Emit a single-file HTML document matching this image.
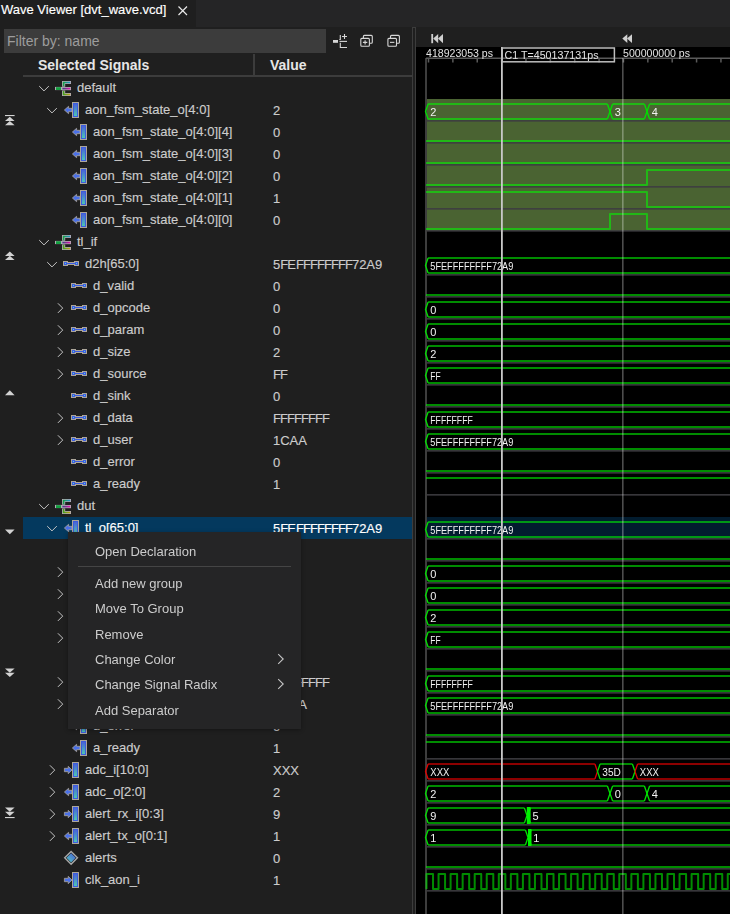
<!DOCTYPE html>
<html><head><meta charset="utf-8"><style>
html,body{margin:0;padding:0;}
body{width:730px;height:914px;overflow:hidden;position:relative;background:#1f1f1f;font-family:"Liberation Sans", sans-serif;}
.t{position:absolute;white-space:nowrap;-webkit-text-stroke:0.15px currentColor;}
.r{position:absolute;}
.wt{font-family:"Liberation Sans", sans-serif;font-size:11px;fill:#f2f2f2;}
.rt{font-family:"Liberation Sans", sans-serif;font-size:11px;fill:#e4e4e4;}
</style></head><body>
<div class="r" style="left:0px;top:0px;width:730px;height:27px;background:#252526;"></div><div class="r" style="left:0px;top:0px;width:196px;height:27px;background:#1f1f1f;"></div><div class="t" style="left:1px;top:3.23px;font-size:13px;line-height:14.52px;color:#ffffff;font-weight:normal;">Wave Viewer [dvt_wave.vcd]</div><svg class="r" style="left:176px;top:4px" width="14" height="14" viewBox="0 0 14 14"><path d="M2.5 2.5 L11 11 M11 2.5 L2.5 11" stroke="#e8e8e8" stroke-width="1.2" fill="none"/></svg><div class="r" style="left:4px;top:29px;width:322px;height:24px;background:#3c3c3c;"></div><div class="t" style="left:7px;top:33.83px;font-size:14px;line-height:15.64px;color:#9d9d9d;font-weight:normal;-webkit-text-stroke:0;">Filter by: name</div><svg class="r" style="left:330px;top:32px" width="76" height="18" viewBox="0 0 76 18">
<g fill="none" stroke="#d6d6d6" stroke-width="1.1">
<rect x="3" y="8" width="5" height="2.8" fill="#d6d6d6" stroke="none"/>
<path d="M10.3 3 V7.5 H9.3"/>
<path d="M9.5 9.4 H17"/>
<path d="M9.8 11.3 H10.3 V15.5 H17"/>
<path d="M14.5 2 V7 M12 4.5 H17"/>
<path d="M33.4 6.2 V4.4 Q33.4 3.4 34.4 3.4 H41.3 Q42.3 3.4 42.3 4.4 V10.3 Q42.3 11.3 41.3 11.3 H39.5"/>
<rect x="30.8" y="6.4" width="8.6" height="7.9" rx="1"/>
<path d="M35.1 8.2 V12.5 M32.9 10.35 H37.3"/>
<path d="M60.5 6.2 V4.4 Q60.5 3.4 61.5 3.4 H68.4 Q69.4 3.4 69.4 4.4 V10.3 Q69.4 11.3 68.4 11.3 H66.6"/>
<rect x="57.9" y="6.4" width="8.6" height="7.9" rx="1"/>
<path d="M60 10.35 H64.4"/>
</g></svg><div class="t" style="left:38px;top:58.33px;font-size:14px;line-height:15.64px;color:#e6e6e6;font-weight:bold;-webkit-text-stroke:0;">Selected Signals</div><div class="t" style="left:270px;top:58.33px;font-size:14px;line-height:15.64px;color:#e6e6e6;font-weight:bold;-webkit-text-stroke:0;">Value</div><div class="r" style="left:253px;top:54px;width:2px;height:21px;background:#3c3c3c;"></div><div class="r" style="left:23px;top:75px;width:389px;height:2px;background:#3c3c3c;"></div><div class="r" style="left:412px;top:27px;width:4px;height:887px;background:#1f1f1f;box-sizing:border-box;border:1px solid #3c3c3c;border-bottom:none;"></div><div class="r" style="left:23px;top:517px;width:389px;height:22px;background:#04395e;"></div><svg width="0" height="0" style="position:absolute"><defs>
<linearGradient id="gb" x1="0" y1="0" x2="0" y2="1"><stop offset="0" stop-color="#4a62d8"/><stop offset="1" stop-color="#4cc6b4"/></linearGradient>
<linearGradient id="gd" x1="1" y1="0" x2="0" y2="1"><stop offset="0" stop-color="#4a5ed8"/><stop offset="1" stop-color="#52c8c0"/></linearGradient>
<linearGradient id="gt" x1="0" y1="0" x2="1" y2="0"><stop offset="0" stop-color="#1a9a50"/><stop offset="1" stop-color="#2a8ad0"/></linearGradient>
<linearGradient id="gm" x1="0" y1="0" x2="1" y2="0"><stop offset="0" stop-color="#303a70"/><stop offset="1" stop-color="#d010a0"/></linearGradient>
<linearGradient id="go" x1="0" y1="0" x2="1" y2="0"><stop offset="0" stop-color="#2a9a2a"/><stop offset="1" stop-color="#b0a020"/></linearGradient>
</defs></svg><svg class="r" style="left:38px;top:84px" width="12" height="8" viewBox="0 0 12 8"><path d="M1.2 2.1 L6 6.9 L10.8 2.1" stroke="#c5c5c5" stroke-width="1" fill="none"/></svg><svg class="r" style="left:55px;top:80px" width="17" height="17" viewBox="0 0 17 17">
<g stroke="#b4aab4" stroke-width="3.2" fill="none" stroke-linecap="square">
<path d="M1.6 8.5 H5.4"/><path d="M14.4 2.5 H8.6 V5.2"/><path d="M8.3 8.6 H14.4"/><path d="M8.6 12 V14.5 H14.4"/>
</g>
<rect x="1" y="7.2" width="5" height="2.8" fill="#13a040"/>
<g fill="none" stroke-width="1.6" stroke-linecap="square">
<path d="M14.4 2.5 H8.6 V5.4" stroke="url(#gt55_80)"/>
<path d="M8.2 8.6 H14.4" stroke="url(#gm55_80)"/>
<path d="M8.6 11.8 V14.5 H14.4" stroke="url(#go55_80)"/>
</g>
<defs>
<linearGradient id="gt55_80" gradientUnits="userSpaceOnUse" x1="8" y1="0" x2="15" y2="0"><stop offset="0" stop-color="#18a040"/><stop offset="1" stop-color="#2090c8"/></linearGradient>
<linearGradient id="gm55_80" gradientUnits="userSpaceOnUse" x1="8" y1="0" x2="15" y2="0"><stop offset="0" stop-color="#404080"/><stop offset="1" stop-color="#e010a8"/></linearGradient>
<linearGradient id="go55_80" gradientUnits="userSpaceOnUse" x1="8" y1="0" x2="15" y2="0"><stop offset="0" stop-color="#40a020"/><stop offset="1" stop-color="#b8a010"/></linearGradient>
</defs>
</svg><div class="t" style="left:77px;top:81.23px;font-size:13px;line-height:14.52px;color:#cccccc;font-weight:normal;">default</div><svg class="r" style="left:46px;top:106px" width="12" height="8" viewBox="0 0 12 8"><path d="M1.2 2.1 L6 6.9 L10.8 2.1" stroke="#c5c5c5" stroke-width="1" fill="none"/></svg><svg class="r" style="left:63px;top:102px" width="17" height="17" viewBox="0 0 17 17">
<path d="M1.4 8 L5.6 4.3 V6.3 H9 V9.7 H5.6 V11.7 Z" fill="#4a70e8" stroke="#aca69a" stroke-width="0.8"/>
<rect x="9" y="0" width="7" height="16" fill="#aca69a"/>
<rect x="10" y="1" width="5" height="14" fill="#3c5cdc"/>
<rect x="11" y="2" width="3" height="12" fill="url(#gb)"/>
</svg><div class="t" style="left:85px;top:103.23px;font-size:13px;line-height:14.52px;color:#cccccc;font-weight:normal;">aon_fsm_state_o[4:0]</div><div class="t" style="left:273px;top:104.23px;font-size:13px;line-height:14.52px;color:#cccccc;font-weight:normal;">2</div><svg class="r" style="left:71px;top:124px" width="17" height="17" viewBox="0 0 17 17">
<path d="M1.4 8 L5.6 4.3 V6.3 H9 V9.7 H5.6 V11.7 Z" fill="#4a70e8" stroke="#aca69a" stroke-width="0.8"/>
<rect x="9" y="0" width="7" height="16" fill="#aca69a"/>
<rect x="10" y="1" width="5" height="14" fill="#3c5cdc"/>
<rect x="11" y="2" width="3" height="12" fill="url(#gb)"/>
</svg><div class="t" style="left:93px;top:125.23px;font-size:13px;line-height:14.52px;color:#cccccc;font-weight:normal;">aon_fsm_state_o[4:0][4]</div><div class="t" style="left:273px;top:126.23px;font-size:13px;line-height:14.52px;color:#cccccc;font-weight:normal;">0</div><svg class="r" style="left:71px;top:146px" width="17" height="17" viewBox="0 0 17 17">
<path d="M1.4 8 L5.6 4.3 V6.3 H9 V9.7 H5.6 V11.7 Z" fill="#4a70e8" stroke="#aca69a" stroke-width="0.8"/>
<rect x="9" y="0" width="7" height="16" fill="#aca69a"/>
<rect x="10" y="1" width="5" height="14" fill="#3c5cdc"/>
<rect x="11" y="2" width="3" height="12" fill="url(#gb)"/>
</svg><div class="t" style="left:93px;top:147.24px;font-size:13px;line-height:14.52px;color:#cccccc;font-weight:normal;">aon_fsm_state_o[4:0][3]</div><div class="t" style="left:273px;top:148.24px;font-size:13px;line-height:14.52px;color:#cccccc;font-weight:normal;">0</div><svg class="r" style="left:71px;top:168px" width="17" height="17" viewBox="0 0 17 17">
<path d="M1.4 8 L5.6 4.3 V6.3 H9 V9.7 H5.6 V11.7 Z" fill="#4a70e8" stroke="#aca69a" stroke-width="0.8"/>
<rect x="9" y="0" width="7" height="16" fill="#aca69a"/>
<rect x="10" y="1" width="5" height="14" fill="#3c5cdc"/>
<rect x="11" y="2" width="3" height="12" fill="url(#gb)"/>
</svg><div class="t" style="left:93px;top:169.24px;font-size:13px;line-height:14.52px;color:#cccccc;font-weight:normal;">aon_fsm_state_o[4:0][2]</div><div class="t" style="left:273px;top:170.24px;font-size:13px;line-height:14.52px;color:#cccccc;font-weight:normal;">0</div><svg class="r" style="left:71px;top:190px" width="17" height="17" viewBox="0 0 17 17">
<path d="M1.4 8 L5.6 4.3 V6.3 H9 V9.7 H5.6 V11.7 Z" fill="#4a70e8" stroke="#aca69a" stroke-width="0.8"/>
<rect x="9" y="0" width="7" height="16" fill="#aca69a"/>
<rect x="10" y="1" width="5" height="14" fill="#3c5cdc"/>
<rect x="11" y="2" width="3" height="12" fill="url(#gb)"/>
</svg><div class="t" style="left:93px;top:191.24px;font-size:13px;line-height:14.52px;color:#cccccc;font-weight:normal;">aon_fsm_state_o[4:0][1]</div><div class="t" style="left:273px;top:192.24px;font-size:13px;line-height:14.52px;color:#cccccc;font-weight:normal;">1</div><svg class="r" style="left:71px;top:212px" width="17" height="17" viewBox="0 0 17 17">
<path d="M1.4 8 L5.6 4.3 V6.3 H9 V9.7 H5.6 V11.7 Z" fill="#4a70e8" stroke="#aca69a" stroke-width="0.8"/>
<rect x="9" y="0" width="7" height="16" fill="#aca69a"/>
<rect x="10" y="1" width="5" height="14" fill="#3c5cdc"/>
<rect x="11" y="2" width="3" height="12" fill="url(#gb)"/>
</svg><div class="t" style="left:93px;top:213.24px;font-size:13px;line-height:14.52px;color:#cccccc;font-weight:normal;">aon_fsm_state_o[4:0][0]</div><div class="t" style="left:273px;top:214.24px;font-size:13px;line-height:14.52px;color:#cccccc;font-weight:normal;">0</div><svg class="r" style="left:38px;top:238px" width="12" height="8" viewBox="0 0 12 8"><path d="M1.2 2.1 L6 6.9 L10.8 2.1" stroke="#c5c5c5" stroke-width="1" fill="none"/></svg><svg class="r" style="left:55px;top:234px" width="17" height="17" viewBox="0 0 17 17">
<g stroke="#b4aab4" stroke-width="3.2" fill="none" stroke-linecap="square">
<path d="M1.6 8.5 H5.4"/><path d="M14.4 2.5 H8.6 V5.2"/><path d="M8.3 8.6 H14.4"/><path d="M8.6 12 V14.5 H14.4"/>
</g>
<rect x="1" y="7.2" width="5" height="2.8" fill="#13a040"/>
<g fill="none" stroke-width="1.6" stroke-linecap="square">
<path d="M14.4 2.5 H8.6 V5.4" stroke="url(#gt55_234)"/>
<path d="M8.2 8.6 H14.4" stroke="url(#gm55_234)"/>
<path d="M8.6 11.8 V14.5 H14.4" stroke="url(#go55_234)"/>
</g>
<defs>
<linearGradient id="gt55_234" gradientUnits="userSpaceOnUse" x1="8" y1="0" x2="15" y2="0"><stop offset="0" stop-color="#18a040"/><stop offset="1" stop-color="#2090c8"/></linearGradient>
<linearGradient id="gm55_234" gradientUnits="userSpaceOnUse" x1="8" y1="0" x2="15" y2="0"><stop offset="0" stop-color="#404080"/><stop offset="1" stop-color="#e010a8"/></linearGradient>
<linearGradient id="go55_234" gradientUnits="userSpaceOnUse" x1="8" y1="0" x2="15" y2="0"><stop offset="0" stop-color="#40a020"/><stop offset="1" stop-color="#b8a010"/></linearGradient>
</defs>
</svg><div class="t" style="left:77px;top:235.24px;font-size:13px;line-height:14.52px;color:#cccccc;font-weight:normal;">tl_if</div><svg class="r" style="left:46px;top:260px" width="12" height="8" viewBox="0 0 12 8"><path d="M1.2 2.1 L6 6.9 L10.8 2.1" stroke="#c5c5c5" stroke-width="1" fill="none"/></svg><svg class="r" style="left:63px;top:256px" width="17" height="17" viewBox="0 0 17 17">
<path d="M0 5 H5 V6 H11 V5 H16 V10 H11 V9 H5 V10 H0 Z" fill="#aca69a"/>
<rect x="1" y="6" width="3" height="3" fill="#3c5ce0"/><rect x="12" y="6" width="3" height="3" fill="#3c5ce0"/>
<rect x="4" y="7" width="8" height="1" fill="#3c5ce0"/>
<rect x="2" y="7" width="1" height="1" fill="#5ad4d4"/><rect x="13" y="7" width="1" height="1" fill="#5ad4d4"/>
</svg><div class="t" style="left:85px;top:257.24px;font-size:13px;line-height:14.52px;color:#cccccc;font-weight:normal;">d2h[65:0]</div><div class="t" style="left:273px;top:258.24px;font-size:13px;line-height:14.52px;color:#cccccc;font-weight:normal;">5<span style="letter-spacing:-0.95px">F</span>E<span style="letter-spacing:-0.95px">F</span><span style="letter-spacing:-0.95px">F</span><span style="letter-spacing:-0.95px">F</span><span style="letter-spacing:-0.95px">F</span><span style="letter-spacing:-0.95px">F</span><span style="letter-spacing:-0.95px">F</span><span style="letter-spacing:-0.95px">F</span><span style="letter-spacing:-0.95px">F</span>72A9</div><svg class="r" style="left:71px;top:278px" width="17" height="17" viewBox="0 0 17 17">
<path d="M0 5 H5 V6 H11 V5 H16 V10 H11 V9 H5 V10 H0 Z" fill="#aca69a"/>
<rect x="1" y="6" width="3" height="3" fill="#3c5ce0"/><rect x="12" y="6" width="3" height="3" fill="#3c5ce0"/>
<rect x="4" y="7" width="8" height="1" fill="#3c5ce0"/>
<rect x="2" y="7" width="1" height="1" fill="#5ad4d4"/><rect x="13" y="7" width="1" height="1" fill="#5ad4d4"/>
</svg><div class="t" style="left:93px;top:279.24px;font-size:13px;line-height:14.52px;color:#cccccc;font-weight:normal;">d_valid</div><div class="t" style="left:273px;top:280.24px;font-size:13px;line-height:14.52px;color:#cccccc;font-weight:normal;">0</div><svg class="r" style="left:56px;top:302px" width="8" height="12" viewBox="0 0 8 12"><path d="M1.9 1.3 L6.7 6.1 L1.9 10.9" stroke="#c5c5c5" stroke-width="1" fill="none"/></svg><svg class="r" style="left:71px;top:300px" width="17" height="17" viewBox="0 0 17 17">
<path d="M0 5 H5 V6 H11 V5 H16 V10 H11 V9 H5 V10 H0 Z" fill="#aca69a"/>
<rect x="1" y="6" width="3" height="3" fill="#3c5ce0"/><rect x="12" y="6" width="3" height="3" fill="#3c5ce0"/>
<rect x="4" y="7" width="8" height="1" fill="#3c5ce0"/>
<rect x="2" y="7" width="1" height="1" fill="#5ad4d4"/><rect x="13" y="7" width="1" height="1" fill="#5ad4d4"/>
</svg><div class="t" style="left:93px;top:301.24px;font-size:13px;line-height:14.52px;color:#cccccc;font-weight:normal;">d_opcode</div><div class="t" style="left:273px;top:302.24px;font-size:13px;line-height:14.52px;color:#cccccc;font-weight:normal;">0</div><svg class="r" style="left:56px;top:324px" width="8" height="12" viewBox="0 0 8 12"><path d="M1.9 1.3 L6.7 6.1 L1.9 10.9" stroke="#c5c5c5" stroke-width="1" fill="none"/></svg><svg class="r" style="left:71px;top:322px" width="17" height="17" viewBox="0 0 17 17">
<path d="M0 5 H5 V6 H11 V5 H16 V10 H11 V9 H5 V10 H0 Z" fill="#aca69a"/>
<rect x="1" y="6" width="3" height="3" fill="#3c5ce0"/><rect x="12" y="6" width="3" height="3" fill="#3c5ce0"/>
<rect x="4" y="7" width="8" height="1" fill="#3c5ce0"/>
<rect x="2" y="7" width="1" height="1" fill="#5ad4d4"/><rect x="13" y="7" width="1" height="1" fill="#5ad4d4"/>
</svg><div class="t" style="left:93px;top:323.24px;font-size:13px;line-height:14.52px;color:#cccccc;font-weight:normal;">d_param</div><div class="t" style="left:273px;top:324.24px;font-size:13px;line-height:14.52px;color:#cccccc;font-weight:normal;">0</div><svg class="r" style="left:56px;top:346px" width="8" height="12" viewBox="0 0 8 12"><path d="M1.9 1.3 L6.7 6.1 L1.9 10.9" stroke="#c5c5c5" stroke-width="1" fill="none"/></svg><svg class="r" style="left:71px;top:344px" width="17" height="17" viewBox="0 0 17 17">
<path d="M0 5 H5 V6 H11 V5 H16 V10 H11 V9 H5 V10 H0 Z" fill="#aca69a"/>
<rect x="1" y="6" width="3" height="3" fill="#3c5ce0"/><rect x="12" y="6" width="3" height="3" fill="#3c5ce0"/>
<rect x="4" y="7" width="8" height="1" fill="#3c5ce0"/>
<rect x="2" y="7" width="1" height="1" fill="#5ad4d4"/><rect x="13" y="7" width="1" height="1" fill="#5ad4d4"/>
</svg><div class="t" style="left:93px;top:345.24px;font-size:13px;line-height:14.52px;color:#cccccc;font-weight:normal;">d_size</div><div class="t" style="left:273px;top:346.24px;font-size:13px;line-height:14.52px;color:#cccccc;font-weight:normal;">2</div><svg class="r" style="left:56px;top:368px" width="8" height="12" viewBox="0 0 8 12"><path d="M1.9 1.3 L6.7 6.1 L1.9 10.9" stroke="#c5c5c5" stroke-width="1" fill="none"/></svg><svg class="r" style="left:71px;top:366px" width="17" height="17" viewBox="0 0 17 17">
<path d="M0 5 H5 V6 H11 V5 H16 V10 H11 V9 H5 V10 H0 Z" fill="#aca69a"/>
<rect x="1" y="6" width="3" height="3" fill="#3c5ce0"/><rect x="12" y="6" width="3" height="3" fill="#3c5ce0"/>
<rect x="4" y="7" width="8" height="1" fill="#3c5ce0"/>
<rect x="2" y="7" width="1" height="1" fill="#5ad4d4"/><rect x="13" y="7" width="1" height="1" fill="#5ad4d4"/>
</svg><div class="t" style="left:93px;top:367.24px;font-size:13px;line-height:14.52px;color:#cccccc;font-weight:normal;">d_source</div><div class="t" style="left:273px;top:368.24px;font-size:13px;line-height:14.52px;color:#cccccc;font-weight:normal;"><span style="letter-spacing:-0.95px">F</span><span style="letter-spacing:-0.95px">F</span></div><svg class="r" style="left:71px;top:388px" width="17" height="17" viewBox="0 0 17 17">
<path d="M0 5 H5 V6 H11 V5 H16 V10 H11 V9 H5 V10 H0 Z" fill="#aca69a"/>
<rect x="1" y="6" width="3" height="3" fill="#3c5ce0"/><rect x="12" y="6" width="3" height="3" fill="#3c5ce0"/>
<rect x="4" y="7" width="8" height="1" fill="#3c5ce0"/>
<rect x="2" y="7" width="1" height="1" fill="#5ad4d4"/><rect x="13" y="7" width="1" height="1" fill="#5ad4d4"/>
</svg><div class="t" style="left:93px;top:389.24px;font-size:13px;line-height:14.52px;color:#cccccc;font-weight:normal;">d_sink</div><div class="t" style="left:273px;top:390.24px;font-size:13px;line-height:14.52px;color:#cccccc;font-weight:normal;">0</div><svg class="r" style="left:56px;top:412px" width="8" height="12" viewBox="0 0 8 12"><path d="M1.9 1.3 L6.7 6.1 L1.9 10.9" stroke="#c5c5c5" stroke-width="1" fill="none"/></svg><svg class="r" style="left:71px;top:410px" width="17" height="17" viewBox="0 0 17 17">
<path d="M0 5 H5 V6 H11 V5 H16 V10 H11 V9 H5 V10 H0 Z" fill="#aca69a"/>
<rect x="1" y="6" width="3" height="3" fill="#3c5ce0"/><rect x="12" y="6" width="3" height="3" fill="#3c5ce0"/>
<rect x="4" y="7" width="8" height="1" fill="#3c5ce0"/>
<rect x="2" y="7" width="1" height="1" fill="#5ad4d4"/><rect x="13" y="7" width="1" height="1" fill="#5ad4d4"/>
</svg><div class="t" style="left:93px;top:411.24px;font-size:13px;line-height:14.52px;color:#cccccc;font-weight:normal;">d_data</div><div class="t" style="left:273px;top:412.24px;font-size:13px;line-height:14.52px;color:#cccccc;font-weight:normal;"><span style="letter-spacing:-0.95px">F</span><span style="letter-spacing:-0.95px">F</span><span style="letter-spacing:-0.95px">F</span><span style="letter-spacing:-0.95px">F</span><span style="letter-spacing:-0.95px">F</span><span style="letter-spacing:-0.95px">F</span><span style="letter-spacing:-0.95px">F</span><span style="letter-spacing:-0.95px">F</span></div><svg class="r" style="left:56px;top:434px" width="8" height="12" viewBox="0 0 8 12"><path d="M1.9 1.3 L6.7 6.1 L1.9 10.9" stroke="#c5c5c5" stroke-width="1" fill="none"/></svg><svg class="r" style="left:71px;top:432px" width="17" height="17" viewBox="0 0 17 17">
<path d="M0 5 H5 V6 H11 V5 H16 V10 H11 V9 H5 V10 H0 Z" fill="#aca69a"/>
<rect x="1" y="6" width="3" height="3" fill="#3c5ce0"/><rect x="12" y="6" width="3" height="3" fill="#3c5ce0"/>
<rect x="4" y="7" width="8" height="1" fill="#3c5ce0"/>
<rect x="2" y="7" width="1" height="1" fill="#5ad4d4"/><rect x="13" y="7" width="1" height="1" fill="#5ad4d4"/>
</svg><div class="t" style="left:93px;top:433.24px;font-size:13px;line-height:14.52px;color:#cccccc;font-weight:normal;">d_user</div><div class="t" style="left:273px;top:434.24px;font-size:13px;line-height:14.52px;color:#cccccc;font-weight:normal;">1CAA</div><svg class="r" style="left:71px;top:454px" width="17" height="17" viewBox="0 0 17 17">
<path d="M0 5 H5 V6 H11 V5 H16 V10 H11 V9 H5 V10 H0 Z" fill="#aca69a"/>
<rect x="1" y="6" width="3" height="3" fill="#3c5ce0"/><rect x="12" y="6" width="3" height="3" fill="#3c5ce0"/>
<rect x="4" y="7" width="8" height="1" fill="#3c5ce0"/>
<rect x="2" y="7" width="1" height="1" fill="#5ad4d4"/><rect x="13" y="7" width="1" height="1" fill="#5ad4d4"/>
</svg><div class="t" style="left:93px;top:455.24px;font-size:13px;line-height:14.52px;color:#cccccc;font-weight:normal;">d_error</div><div class="t" style="left:273px;top:456.24px;font-size:13px;line-height:14.52px;color:#cccccc;font-weight:normal;">0</div><svg class="r" style="left:71px;top:476px" width="17" height="17" viewBox="0 0 17 17">
<path d="M0 5 H5 V6 H11 V5 H16 V10 H11 V9 H5 V10 H0 Z" fill="#aca69a"/>
<rect x="1" y="6" width="3" height="3" fill="#3c5ce0"/><rect x="12" y="6" width="3" height="3" fill="#3c5ce0"/>
<rect x="4" y="7" width="8" height="1" fill="#3c5ce0"/>
<rect x="2" y="7" width="1" height="1" fill="#5ad4d4"/><rect x="13" y="7" width="1" height="1" fill="#5ad4d4"/>
</svg><div class="t" style="left:93px;top:477.24px;font-size:13px;line-height:14.52px;color:#cccccc;font-weight:normal;">a_ready</div><div class="t" style="left:273px;top:478.24px;font-size:13px;line-height:14.52px;color:#cccccc;font-weight:normal;">1</div><svg class="r" style="left:38px;top:502px" width="12" height="8" viewBox="0 0 12 8"><path d="M1.2 2.1 L6 6.9 L10.8 2.1" stroke="#c5c5c5" stroke-width="1" fill="none"/></svg><svg class="r" style="left:55px;top:498px" width="17" height="17" viewBox="0 0 17 17">
<g stroke="#b4aab4" stroke-width="3.2" fill="none" stroke-linecap="square">
<path d="M1.6 8.5 H5.4"/><path d="M14.4 2.5 H8.6 V5.2"/><path d="M8.3 8.6 H14.4"/><path d="M8.6 12 V14.5 H14.4"/>
</g>
<rect x="1" y="7.2" width="5" height="2.8" fill="#13a040"/>
<g fill="none" stroke-width="1.6" stroke-linecap="square">
<path d="M14.4 2.5 H8.6 V5.4" stroke="url(#gt55_498)"/>
<path d="M8.2 8.6 H14.4" stroke="url(#gm55_498)"/>
<path d="M8.6 11.8 V14.5 H14.4" stroke="url(#go55_498)"/>
</g>
<defs>
<linearGradient id="gt55_498" gradientUnits="userSpaceOnUse" x1="8" y1="0" x2="15" y2="0"><stop offset="0" stop-color="#18a040"/><stop offset="1" stop-color="#2090c8"/></linearGradient>
<linearGradient id="gm55_498" gradientUnits="userSpaceOnUse" x1="8" y1="0" x2="15" y2="0"><stop offset="0" stop-color="#404080"/><stop offset="1" stop-color="#e010a8"/></linearGradient>
<linearGradient id="go55_498" gradientUnits="userSpaceOnUse" x1="8" y1="0" x2="15" y2="0"><stop offset="0" stop-color="#40a020"/><stop offset="1" stop-color="#b8a010"/></linearGradient>
</defs>
</svg><div class="t" style="left:77px;top:499.24px;font-size:13px;line-height:14.52px;color:#cccccc;font-weight:normal;">dut</div><svg class="r" style="left:46px;top:524px" width="12" height="8" viewBox="0 0 12 8"><path d="M1.2 2.1 L6 6.9 L10.8 2.1" stroke="#c5c5c5" stroke-width="1" fill="none"/></svg><svg class="r" style="left:63px;top:520px" width="17" height="17" viewBox="0 0 17 17">
<path d="M1.4 8 L5.6 4.3 V6.3 H9 V9.7 H5.6 V11.7 Z" fill="#4a70e8" stroke="#aca69a" stroke-width="0.8"/>
<rect x="9" y="0" width="7" height="16" fill="#aca69a"/>
<rect x="10" y="1" width="5" height="14" fill="#3c5cdc"/>
<rect x="11" y="2" width="3" height="12" fill="url(#gb)"/>
</svg><div class="t" style="left:85px;top:521.24px;font-size:13px;line-height:14.52px;color:#ffffff;font-weight:normal;">tl_o[65:0]</div><div class="t" style="left:273px;top:522.24px;font-size:13px;line-height:14.52px;color:#ffffff;font-weight:normal;">5<span style="letter-spacing:-0.95px">F</span>E<span style="letter-spacing:-0.95px">F</span><span style="letter-spacing:-0.95px">F</span><span style="letter-spacing:-0.95px">F</span><span style="letter-spacing:-0.95px">F</span><span style="letter-spacing:-0.95px">F</span><span style="letter-spacing:-0.95px">F</span><span style="letter-spacing:-0.95px">F</span><span style="letter-spacing:-0.95px">F</span>72A9</div><svg class="r" style="left:71px;top:542px" width="17" height="17" viewBox="0 0 17 17">
<path d="M1.4 8 L5.6 4.3 V6.3 H9 V9.7 H5.6 V11.7 Z" fill="#4a70e8" stroke="#aca69a" stroke-width="0.8"/>
<rect x="9" y="0" width="7" height="16" fill="#aca69a"/>
<rect x="10" y="1" width="5" height="14" fill="#3c5cdc"/>
<rect x="11" y="2" width="3" height="12" fill="url(#gb)"/>
</svg><div class="t" style="left:93px;top:543.24px;font-size:13px;line-height:14.52px;color:#cccccc;font-weight:normal;">d_valid</div><div class="t" style="left:273px;top:544.24px;font-size:13px;line-height:14.52px;color:#cccccc;font-weight:normal;">0</div><svg class="r" style="left:56px;top:566px" width="8" height="12" viewBox="0 0 8 12"><path d="M1.9 1.3 L6.7 6.1 L1.9 10.9" stroke="#c5c5c5" stroke-width="1" fill="none"/></svg><svg class="r" style="left:71px;top:564px" width="17" height="17" viewBox="0 0 17 17">
<path d="M1.4 8 L5.6 4.3 V6.3 H9 V9.7 H5.6 V11.7 Z" fill="#4a70e8" stroke="#aca69a" stroke-width="0.8"/>
<rect x="9" y="0" width="7" height="16" fill="#aca69a"/>
<rect x="10" y="1" width="5" height="14" fill="#3c5cdc"/>
<rect x="11" y="2" width="3" height="12" fill="url(#gb)"/>
</svg><div class="t" style="left:93px;top:565.24px;font-size:13px;line-height:14.52px;color:#cccccc;font-weight:normal;">d_opcode</div><div class="t" style="left:273px;top:566.24px;font-size:13px;line-height:14.52px;color:#cccccc;font-weight:normal;">0</div><svg class="r" style="left:56px;top:588px" width="8" height="12" viewBox="0 0 8 12"><path d="M1.9 1.3 L6.7 6.1 L1.9 10.9" stroke="#c5c5c5" stroke-width="1" fill="none"/></svg><svg class="r" style="left:71px;top:586px" width="17" height="17" viewBox="0 0 17 17">
<path d="M1.4 8 L5.6 4.3 V6.3 H9 V9.7 H5.6 V11.7 Z" fill="#4a70e8" stroke="#aca69a" stroke-width="0.8"/>
<rect x="9" y="0" width="7" height="16" fill="#aca69a"/>
<rect x="10" y="1" width="5" height="14" fill="#3c5cdc"/>
<rect x="11" y="2" width="3" height="12" fill="url(#gb)"/>
</svg><div class="t" style="left:93px;top:587.24px;font-size:13px;line-height:14.52px;color:#cccccc;font-weight:normal;">d_param</div><div class="t" style="left:273px;top:588.24px;font-size:13px;line-height:14.52px;color:#cccccc;font-weight:normal;">0</div><svg class="r" style="left:56px;top:610px" width="8" height="12" viewBox="0 0 8 12"><path d="M1.9 1.3 L6.7 6.1 L1.9 10.9" stroke="#c5c5c5" stroke-width="1" fill="none"/></svg><svg class="r" style="left:71px;top:608px" width="17" height="17" viewBox="0 0 17 17">
<path d="M1.4 8 L5.6 4.3 V6.3 H9 V9.7 H5.6 V11.7 Z" fill="#4a70e8" stroke="#aca69a" stroke-width="0.8"/>
<rect x="9" y="0" width="7" height="16" fill="#aca69a"/>
<rect x="10" y="1" width="5" height="14" fill="#3c5cdc"/>
<rect x="11" y="2" width="3" height="12" fill="url(#gb)"/>
</svg><div class="t" style="left:93px;top:609.24px;font-size:13px;line-height:14.52px;color:#cccccc;font-weight:normal;">d_size</div><div class="t" style="left:273px;top:610.24px;font-size:13px;line-height:14.52px;color:#cccccc;font-weight:normal;">2</div><svg class="r" style="left:56px;top:632px" width="8" height="12" viewBox="0 0 8 12"><path d="M1.9 1.3 L6.7 6.1 L1.9 10.9" stroke="#c5c5c5" stroke-width="1" fill="none"/></svg><svg class="r" style="left:71px;top:630px" width="17" height="17" viewBox="0 0 17 17">
<path d="M1.4 8 L5.6 4.3 V6.3 H9 V9.7 H5.6 V11.7 Z" fill="#4a70e8" stroke="#aca69a" stroke-width="0.8"/>
<rect x="9" y="0" width="7" height="16" fill="#aca69a"/>
<rect x="10" y="1" width="5" height="14" fill="#3c5cdc"/>
<rect x="11" y="2" width="3" height="12" fill="url(#gb)"/>
</svg><div class="t" style="left:93px;top:631.24px;font-size:13px;line-height:14.52px;color:#cccccc;font-weight:normal;">d_source</div><div class="t" style="left:273px;top:632.24px;font-size:13px;line-height:14.52px;color:#cccccc;font-weight:normal;"><span style="letter-spacing:-0.95px">F</span><span style="letter-spacing:-0.95px">F</span></div><svg class="r" style="left:71px;top:652px" width="17" height="17" viewBox="0 0 17 17">
<path d="M1.4 8 L5.6 4.3 V6.3 H9 V9.7 H5.6 V11.7 Z" fill="#4a70e8" stroke="#aca69a" stroke-width="0.8"/>
<rect x="9" y="0" width="7" height="16" fill="#aca69a"/>
<rect x="10" y="1" width="5" height="14" fill="#3c5cdc"/>
<rect x="11" y="2" width="3" height="12" fill="url(#gb)"/>
</svg><div class="t" style="left:93px;top:653.24px;font-size:13px;line-height:14.52px;color:#cccccc;font-weight:normal;">d_sink</div><div class="t" style="left:273px;top:654.24px;font-size:13px;line-height:14.52px;color:#cccccc;font-weight:normal;">0</div><svg class="r" style="left:56px;top:676px" width="8" height="12" viewBox="0 0 8 12"><path d="M1.9 1.3 L6.7 6.1 L1.9 10.9" stroke="#c5c5c5" stroke-width="1" fill="none"/></svg><svg class="r" style="left:71px;top:674px" width="17" height="17" viewBox="0 0 17 17">
<path d="M1.4 8 L5.6 4.3 V6.3 H9 V9.7 H5.6 V11.7 Z" fill="#4a70e8" stroke="#aca69a" stroke-width="0.8"/>
<rect x="9" y="0" width="7" height="16" fill="#aca69a"/>
<rect x="10" y="1" width="5" height="14" fill="#3c5cdc"/>
<rect x="11" y="2" width="3" height="12" fill="url(#gb)"/>
</svg><div class="t" style="left:93px;top:675.24px;font-size:13px;line-height:14.52px;color:#cccccc;font-weight:normal;">d_data</div><div class="t" style="left:273px;top:676.24px;font-size:13px;line-height:14.52px;color:#cccccc;font-weight:normal;"><span style="letter-spacing:-0.95px">F</span><span style="letter-spacing:-0.95px">F</span><span style="letter-spacing:-0.95px">F</span><span style="letter-spacing:-0.95px">F</span><span style="letter-spacing:-0.95px">F</span><span style="letter-spacing:-0.95px">F</span><span style="letter-spacing:-0.95px">F</span><span style="letter-spacing:-0.95px">F</span></div><svg class="r" style="left:56px;top:698px" width="8" height="12" viewBox="0 0 8 12"><path d="M1.9 1.3 L6.7 6.1 L1.9 10.9" stroke="#c5c5c5" stroke-width="1" fill="none"/></svg><svg class="r" style="left:71px;top:696px" width="17" height="17" viewBox="0 0 17 17">
<path d="M1.4 8 L5.6 4.3 V6.3 H9 V9.7 H5.6 V11.7 Z" fill="#4a70e8" stroke="#aca69a" stroke-width="0.8"/>
<rect x="9" y="0" width="7" height="16" fill="#aca69a"/>
<rect x="10" y="1" width="5" height="14" fill="#3c5cdc"/>
<rect x="11" y="2" width="3" height="12" fill="url(#gb)"/>
</svg><div class="t" style="left:93px;top:697.24px;font-size:13px;line-height:14.52px;color:#cccccc;font-weight:normal;">d_user</div><div class="t" style="left:273px;top:698.24px;font-size:13px;line-height:14.52px;color:#cccccc;font-weight:normal;">1CAA</div><svg class="r" style="left:71px;top:718px" width="17" height="17" viewBox="0 0 17 17">
<path d="M1.4 8 L5.6 4.3 V6.3 H9 V9.7 H5.6 V11.7 Z" fill="#4a70e8" stroke="#aca69a" stroke-width="0.8"/>
<rect x="9" y="0" width="7" height="16" fill="#aca69a"/>
<rect x="10" y="1" width="5" height="14" fill="#3c5cdc"/>
<rect x="11" y="2" width="3" height="12" fill="url(#gb)"/>
</svg><div class="t" style="left:93px;top:719.24px;font-size:13px;line-height:14.52px;color:#cccccc;font-weight:normal;">d_error</div><div class="t" style="left:273px;top:720.24px;font-size:13px;line-height:14.52px;color:#cccccc;font-weight:normal;">0</div><svg class="r" style="left:71px;top:740px" width="17" height="17" viewBox="0 0 17 17">
<path d="M1.4 8 L5.6 4.3 V6.3 H9 V9.7 H5.6 V11.7 Z" fill="#4a70e8" stroke="#aca69a" stroke-width="0.8"/>
<rect x="9" y="0" width="7" height="16" fill="#aca69a"/>
<rect x="10" y="1" width="5" height="14" fill="#3c5cdc"/>
<rect x="11" y="2" width="3" height="12" fill="url(#gb)"/>
</svg><div class="t" style="left:93px;top:741.24px;font-size:13px;line-height:14.52px;color:#cccccc;font-weight:normal;">a_ready</div><div class="t" style="left:273px;top:742.24px;font-size:13px;line-height:14.52px;color:#cccccc;font-weight:normal;">1</div><svg class="r" style="left:48px;top:764px" width="8" height="12" viewBox="0 0 8 12"><path d="M1.9 1.3 L6.7 6.1 L1.9 10.9" stroke="#c5c5c5" stroke-width="1" fill="none"/></svg><svg class="r" style="left:63px;top:762px" width="17" height="17" viewBox="0 0 17 17">
<path d="M9 8 L5.2 4.3 V6.3 H1.4 V9.7 H5.2 V11.7 Z" fill="#4a70e8" stroke="#aca69a" stroke-width="0.8"/>
<rect x="9" y="0" width="7" height="16" fill="#aca69a"/>
<rect x="10" y="1" width="5" height="14" fill="#3c5cdc"/>
<rect x="11" y="2" width="3" height="12" fill="url(#gb)"/>
</svg><div class="t" style="left:85px;top:763.24px;font-size:13px;line-height:14.52px;color:#cccccc;font-weight:normal;">adc_i[10:0]</div><div class="t" style="left:273px;top:764.24px;font-size:13px;line-height:14.52px;color:#cccccc;font-weight:normal;">XXX</div><svg class="r" style="left:48px;top:786px" width="8" height="12" viewBox="0 0 8 12"><path d="M1.9 1.3 L6.7 6.1 L1.9 10.9" stroke="#c5c5c5" stroke-width="1" fill="none"/></svg><svg class="r" style="left:63px;top:784px" width="17" height="17" viewBox="0 0 17 17">
<path d="M1.4 8 L5.6 4.3 V6.3 H9 V9.7 H5.6 V11.7 Z" fill="#4a70e8" stroke="#aca69a" stroke-width="0.8"/>
<rect x="9" y="0" width="7" height="16" fill="#aca69a"/>
<rect x="10" y="1" width="5" height="14" fill="#3c5cdc"/>
<rect x="11" y="2" width="3" height="12" fill="url(#gb)"/>
</svg><div class="t" style="left:85px;top:785.24px;font-size:13px;line-height:14.52px;color:#cccccc;font-weight:normal;">adc_o[2:0]</div><div class="t" style="left:273px;top:786.24px;font-size:13px;line-height:14.52px;color:#cccccc;font-weight:normal;">2</div><svg class="r" style="left:48px;top:808px" width="8" height="12" viewBox="0 0 8 12"><path d="M1.9 1.3 L6.7 6.1 L1.9 10.9" stroke="#c5c5c5" stroke-width="1" fill="none"/></svg><svg class="r" style="left:63px;top:806px" width="17" height="17" viewBox="0 0 17 17">
<path d="M9 8 L5.2 4.3 V6.3 H1.4 V9.7 H5.2 V11.7 Z" fill="#4a70e8" stroke="#aca69a" stroke-width="0.8"/>
<rect x="9" y="0" width="7" height="16" fill="#aca69a"/>
<rect x="10" y="1" width="5" height="14" fill="#3c5cdc"/>
<rect x="11" y="2" width="3" height="12" fill="url(#gb)"/>
</svg><div class="t" style="left:85px;top:807.24px;font-size:13px;line-height:14.52px;color:#cccccc;font-weight:normal;">alert_rx_i[0:3]</div><div class="t" style="left:273px;top:808.24px;font-size:13px;line-height:14.52px;color:#cccccc;font-weight:normal;">9</div><svg class="r" style="left:48px;top:830px" width="8" height="12" viewBox="0 0 8 12"><path d="M1.9 1.3 L6.7 6.1 L1.9 10.9" stroke="#c5c5c5" stroke-width="1" fill="none"/></svg><svg class="r" style="left:63px;top:828px" width="17" height="17" viewBox="0 0 17 17">
<path d="M1.4 8 L5.6 4.3 V6.3 H9 V9.7 H5.6 V11.7 Z" fill="#4a70e8" stroke="#aca69a" stroke-width="0.8"/>
<rect x="9" y="0" width="7" height="16" fill="#aca69a"/>
<rect x="10" y="1" width="5" height="14" fill="#3c5cdc"/>
<rect x="11" y="2" width="3" height="12" fill="url(#gb)"/>
</svg><div class="t" style="left:85px;top:829.24px;font-size:13px;line-height:14.52px;color:#cccccc;font-weight:normal;">alert_tx_o[0:1]</div><div class="t" style="left:273px;top:830.24px;font-size:13px;line-height:14.52px;color:#cccccc;font-weight:normal;">1</div><svg class="r" style="left:63px;top:850px" width="17" height="17" viewBox="0 0 17 17">
<path d="M8.1 1.4 L14.5 7.8 L8.1 14.2 L1.7 7.8 Z" fill="none" stroke="#a9a9a9" stroke-width="1.4"/>
<path d="M8.1 3.2 L12.7 7.8 L8.1 12.4 L3.5 7.8 Z" fill="url(#gd)"/>
</svg><div class="t" style="left:85px;top:851.24px;font-size:13px;line-height:14.52px;color:#cccccc;font-weight:normal;">alerts</div><div class="t" style="left:273px;top:852.24px;font-size:13px;line-height:14.52px;color:#cccccc;font-weight:normal;">0</div><svg class="r" style="left:63px;top:872px" width="17" height="17" viewBox="0 0 17 17">
<path d="M9 8 L5.2 4.3 V6.3 H1.4 V9.7 H5.2 V11.7 Z" fill="#4a70e8" stroke="#aca69a" stroke-width="0.8"/>
<rect x="9" y="0" width="7" height="16" fill="#aca69a"/>
<rect x="10" y="1" width="5" height="14" fill="#3c5cdc"/>
<rect x="11" y="2" width="3" height="12" fill="url(#gb)"/>
</svg><div class="t" style="left:85px;top:873.24px;font-size:13px;line-height:14.52px;color:#cccccc;font-weight:normal;">clk_aon_i</div><div class="t" style="left:273px;top:874.24px;font-size:13px;line-height:14.52px;color:#cccccc;font-weight:normal;">1</div><svg class="r" style="left:0;top:0" width="24" height="914"><g fill="#d2d2d2"><rect x="5" y="115" width="9.6" height="1.1"/><path d="M5.000000000000001 121 L9.8 116.7 L14.600000000000001 121 Z"/><path d="M5.000000000000001 125.2 L9.8 120.9 L14.600000000000001 125.2 Z"/><path d="M5.000000000000001 255.9 L9.8 251.6 L14.600000000000001 255.9 Z"/><path d="M5.000000000000001 260.1 L9.8 255.8 L14.600000000000001 260.1 Z"/><path d="M5.000000000000001 395.2 L9.8 390.2 L14.600000000000001 395.2 Z"/><path d="M5.000000000000001 529.5 L9.8 534.2 L14.600000000000001 529.5 Z"/><path d="M5.000000000000001 668.6 L9.8 672.8 L14.600000000000001 668.6 Z"/><path d="M5.000000000000001 672.8 L9.8 677.1 L14.600000000000001 672.8 Z"/><path d="M5.000000000000001 807.6 L9.8 811.8 L14.600000000000001 807.6 Z"/><path d="M5.000000000000001 811.8 L9.8 816.1 L14.600000000000001 811.8 Z"/><rect x="5" y="817" width="9.6" height="1.1"/></g></svg><svg class="r" style="left:0;top:0;will-change:transform" width="730" height="914" viewBox="0 0 730 914"><rect x="416" y="47" width="314" height="867" fill="#000"/><g fill="#cfcfcf"><rect x="431.3" y="34" width="1.8" height="9.2"/><path d="M433.2 38.6 L438.2 34 V43.2 Z"/><path d="M438 38.6 L443 34 V43.2 Z"/></g><g fill="#cfcfcf"><path d="M622.3 38.6 L627.3 34.2 V43 Z"/><path d="M627 38.6 L632 34.2 V43 Z"/></g><rect x="425" y="58" width="2" height="856" fill="#3d3d3d"/><rect x="427" y="99" width="303" height="132" fill="#4a6332"/><rect x="427" y="517" width="303" height="22" fill="#021c2f"/><path d="M428.1 104 H607.4 M428.1 119 H607.4" stroke="rgba(0,255,0,0.55)" stroke-width="2" fill="none"/><path d="M428.1 104 L425.5 111.5 L428.1 119" stroke="#00e000" stroke-width="1.3" fill="none"/><path d="M607.4 104 L610 111.5 L607.4 119" stroke="#00e000" stroke-width="1.3" fill="none"/><text x="430.3" y="116" class="wt">2</text><path d="M612.6 104 H644.4 M612.6 119 H644.4" stroke="rgba(0,255,0,0.55)" stroke-width="2" fill="none"/><path d="M612.6 104 L610 111.5 L612.6 119" stroke="#00e000" stroke-width="1.3" fill="none"/><path d="M644.4 104 L647 111.5 L644.4 119" stroke="#00e000" stroke-width="1.3" fill="none"/><text x="614.8" y="116" class="wt">3</text><path d="M649.6 104 H757.4 M649.6 119 H757.4" stroke="rgba(0,255,0,0.55)" stroke-width="2" fill="none"/><path d="M649.6 104 L647 111.5 L649.6 119" stroke="#00e000" stroke-width="1.3" fill="none"/><text x="651.8" y="116" class="wt">4</text><rect x="427" y="120.1" width="303" height="1.5" fill="#3e3c41"/><path d="M426 141 H731" stroke="rgba(0,255,0,0.55)" stroke-width="2" fill="none" stroke-linejoin="round"/><rect x="427" y="142.1" width="303" height="1.5" fill="#3e3c41"/><path d="M426 163 H731" stroke="rgba(0,255,0,0.55)" stroke-width="2" fill="none" stroke-linejoin="round"/><rect x="427" y="164.1" width="303" height="1.5" fill="#3e3c41"/><path d="M426 185 H647 V170 H731" stroke="rgba(0,255,0,0.55)" stroke-width="2" fill="none" stroke-linejoin="round"/><rect x="427" y="186.1" width="303" height="1.5" fill="#3e3c41"/><path d="M426 192 H647 V207 H731" stroke="rgba(0,255,0,0.55)" stroke-width="2" fill="none" stroke-linejoin="round"/><rect x="427" y="208.1" width="303" height="1.5" fill="#3e3c41"/><path d="M426 229 H610 V214 H647 V229 H731" stroke="rgba(0,255,0,0.55)" stroke-width="2" fill="none" stroke-linejoin="round"/><rect x="427" y="230.1" width="303" height="1.5" fill="#3e3c41"/><path d="M428.1 258 H757.4 M428.1 273 H757.4" stroke="rgba(0,255,0,0.55)" stroke-width="2" fill="none"/><path d="M428.1 258 L425.5 265.5 L428.1 273" stroke="#00e000" stroke-width="1.3" fill="none"/><text x="430.3" y="270" class="wt" textLength="83" lengthAdjust="spacingAndGlyphs">5FEFFFFFFFF72A9</text><rect x="427" y="274.1" width="303" height="1.5" fill="#3e3c41"/><path d="M426 295 H731" stroke="rgba(0,255,0,0.55)" stroke-width="2" fill="none" stroke-linejoin="round"/><rect x="427" y="296.1" width="303" height="1.5" fill="#3e3c41"/><path d="M428.1 302 H757.4 M428.1 317 H757.4" stroke="rgba(0,255,0,0.55)" stroke-width="2" fill="none"/><path d="M428.1 302 L425.5 309.5 L428.1 317" stroke="#00e000" stroke-width="1.3" fill="none"/><text x="430.3" y="314" class="wt">0</text><rect x="427" y="318.1" width="303" height="1.5" fill="#3e3c41"/><path d="M428.1 324 H757.4 M428.1 339 H757.4" stroke="rgba(0,255,0,0.55)" stroke-width="2" fill="none"/><path d="M428.1 324 L425.5 331.5 L428.1 339" stroke="#00e000" stroke-width="1.3" fill="none"/><text x="430.3" y="336" class="wt">0</text><rect x="427" y="340.1" width="303" height="1.5" fill="#3e3c41"/><path d="M428.1 346 H757.4 M428.1 361 H757.4" stroke="rgba(0,255,0,0.55)" stroke-width="2" fill="none"/><path d="M428.1 346 L425.5 353.5 L428.1 361" stroke="#00e000" stroke-width="1.3" fill="none"/><text x="430.3" y="358" class="wt">2</text><rect x="427" y="362.1" width="303" height="1.5" fill="#3e3c41"/><path d="M428.1 368 H757.4 M428.1 383 H757.4" stroke="rgba(0,255,0,0.55)" stroke-width="2" fill="none"/><path d="M428.1 368 L425.5 375.5 L428.1 383" stroke="#00e000" stroke-width="1.3" fill="none"/><text x="430.3" y="380" class="wt" textLength="10.3" lengthAdjust="spacingAndGlyphs">FF</text><rect x="427" y="384.1" width="303" height="1.5" fill="#3e3c41"/><path d="M426 405 H731" stroke="rgba(0,255,0,0.55)" stroke-width="2" fill="none" stroke-linejoin="round"/><rect x="427" y="406.1" width="303" height="1.5" fill="#3e3c41"/><path d="M428.1 412 H757.4 M428.1 427 H757.4" stroke="rgba(0,255,0,0.55)" stroke-width="2" fill="none"/><path d="M428.1 412 L425.5 419.5 L428.1 427" stroke="#00e000" stroke-width="1.3" fill="none"/><text x="430.3" y="424" class="wt" textLength="42.5" lengthAdjust="spacingAndGlyphs">FFFFFFFF</text><rect x="427" y="428.1" width="303" height="1.5" fill="#3e3c41"/><path d="M428.1 434 H757.4 M428.1 449 H757.4" stroke="rgba(0,255,0,0.55)" stroke-width="2" fill="none"/><path d="M428.1 434 L425.5 441.5 L428.1 449" stroke="#00e000" stroke-width="1.3" fill="none"/><text x="430.3" y="446" class="wt" textLength="83" lengthAdjust="spacingAndGlyphs">5FEFFFFFFFF72A9</text><rect x="427" y="450.1" width="303" height="1.5" fill="#3e3c41"/><path d="M426 471 H731" stroke="rgba(0,255,0,0.55)" stroke-width="2" fill="none" stroke-linejoin="round"/><rect x="427" y="472.1" width="303" height="1.5" fill="#3e3c41"/><path d="M426 478 H731" stroke="rgba(0,255,0,0.55)" stroke-width="2" fill="none" stroke-linejoin="round"/><rect x="427" y="494.1" width="303" height="1.5" fill="#3e3c41"/><path d="M428.1 522 H757.4 M428.1 537 H757.4" stroke="rgba(0,255,0,0.55)" stroke-width="2" fill="none"/><path d="M428.1 522 L425.5 529.5 L428.1 537" stroke="#00e000" stroke-width="1.3" fill="none"/><text x="430.3" y="534" class="wt" textLength="83" lengthAdjust="spacingAndGlyphs">5FEFFFFFFFF72A9</text><rect x="427" y="538.1" width="303" height="1.5" fill="#3e3c41"/><path d="M426 559 H731" stroke="rgba(0,255,0,0.55)" stroke-width="2" fill="none" stroke-linejoin="round"/><rect x="427" y="560.1" width="303" height="1.5" fill="#3e3c41"/><path d="M428.1 566 H757.4 M428.1 581 H757.4" stroke="rgba(0,255,0,0.55)" stroke-width="2" fill="none"/><path d="M428.1 566 L425.5 573.5 L428.1 581" stroke="#00e000" stroke-width="1.3" fill="none"/><text x="430.3" y="578" class="wt">0</text><rect x="427" y="582.1" width="303" height="1.5" fill="#3e3c41"/><path d="M428.1 588 H757.4 M428.1 603 H757.4" stroke="rgba(0,255,0,0.55)" stroke-width="2" fill="none"/><path d="M428.1 588 L425.5 595.5 L428.1 603" stroke="#00e000" stroke-width="1.3" fill="none"/><text x="430.3" y="600" class="wt">0</text><rect x="427" y="604.1" width="303" height="1.5" fill="#3e3c41"/><path d="M428.1 610 H757.4 M428.1 625 H757.4" stroke="rgba(0,255,0,0.55)" stroke-width="2" fill="none"/><path d="M428.1 610 L425.5 617.5 L428.1 625" stroke="#00e000" stroke-width="1.3" fill="none"/><text x="430.3" y="622" class="wt">2</text><rect x="427" y="626.1" width="303" height="1.5" fill="#3e3c41"/><path d="M428.1 632 H757.4 M428.1 647 H757.4" stroke="rgba(0,255,0,0.55)" stroke-width="2" fill="none"/><path d="M428.1 632 L425.5 639.5 L428.1 647" stroke="#00e000" stroke-width="1.3" fill="none"/><text x="430.3" y="644" class="wt" textLength="10.3" lengthAdjust="spacingAndGlyphs">FF</text><rect x="427" y="648.1" width="303" height="1.5" fill="#3e3c41"/><path d="M426 669 H731" stroke="rgba(0,255,0,0.55)" stroke-width="2" fill="none" stroke-linejoin="round"/><rect x="427" y="670.1" width="303" height="1.5" fill="#3e3c41"/><path d="M428.1 676 H757.4 M428.1 691 H757.4" stroke="rgba(0,255,0,0.55)" stroke-width="2" fill="none"/><path d="M428.1 676 L425.5 683.5 L428.1 691" stroke="#00e000" stroke-width="1.3" fill="none"/><text x="430.3" y="688" class="wt" textLength="42.5" lengthAdjust="spacingAndGlyphs">FFFFFFFF</text><rect x="427" y="692.1" width="303" height="1.5" fill="#3e3c41"/><path d="M428.1 698 H757.4 M428.1 713 H757.4" stroke="rgba(0,255,0,0.55)" stroke-width="2" fill="none"/><path d="M428.1 698 L425.5 705.5 L428.1 713" stroke="#00e000" stroke-width="1.3" fill="none"/><text x="430.3" y="710" class="wt" textLength="83" lengthAdjust="spacingAndGlyphs">5FEFFFFFFFF72A9</text><rect x="427" y="714.1" width="303" height="1.5" fill="#3e3c41"/><path d="M426 735 H731" stroke="rgba(0,255,0,0.55)" stroke-width="2" fill="none" stroke-linejoin="round"/><rect x="427" y="736.1" width="303" height="1.5" fill="#3e3c41"/><path d="M426 742 H731" stroke="rgba(0,255,0,0.55)" stroke-width="2" fill="none" stroke-linejoin="round"/><rect x="427" y="758.1" width="303" height="1.5" fill="#3e3c41"/><path d="M428.1 764 H594.9 M428.1 779 H594.9" stroke="rgba(255,0,0,0.55)" stroke-width="2" fill="none"/><path d="M428.1 764 L425.5 771.5 L428.1 779" stroke="#e00000" stroke-width="1.3" fill="none"/><path d="M594.9 764 L597.5 771.5 L594.9 779" stroke="#e00000" stroke-width="1.3" fill="none"/><text x="430.3" y="776" class="wt" textLength="19" lengthAdjust="spacingAndGlyphs">XXX</text><path d="M600.1 764 H632.4 M600.1 779 H632.4" stroke="rgba(0,255,0,0.55)" stroke-width="2" fill="none"/><path d="M600.1 764 L597.5 771.5 L600.1 779" stroke="#00e000" stroke-width="1.3" fill="none"/><path d="M632.4 764 L635 771.5 L632.4 779" stroke="#00e000" stroke-width="1.3" fill="none"/><text x="602.3" y="776" class="wt" textLength="18.5" lengthAdjust="spacingAndGlyphs">35D</text><path d="M637.6 764 H757.4 M637.6 779 H757.4" stroke="rgba(255,0,0,0.55)" stroke-width="2" fill="none"/><path d="M637.6 764 L635 771.5 L637.6 779" stroke="#e00000" stroke-width="1.3" fill="none"/><text x="639.8" y="776" class="wt" textLength="19" lengthAdjust="spacingAndGlyphs">XXX</text><rect x="427" y="780.1" width="303" height="1.5" fill="#3e3c41"/><path d="M428.1 786 H607.4 M428.1 801 H607.4" stroke="rgba(0,255,0,0.55)" stroke-width="2" fill="none"/><path d="M428.1 786 L425.5 793.5 L428.1 801" stroke="#00e000" stroke-width="1.3" fill="none"/><path d="M607.4 786 L610 793.5 L607.4 801" stroke="#00e000" stroke-width="1.3" fill="none"/><text x="430.3" y="798" class="wt">2</text><path d="M612.6 786 H644.4 M612.6 801 H644.4" stroke="rgba(0,255,0,0.55)" stroke-width="2" fill="none"/><path d="M612.6 786 L610 793.5 L612.6 801" stroke="#00e000" stroke-width="1.3" fill="none"/><path d="M644.4 786 L647 793.5 L644.4 801" stroke="#00e000" stroke-width="1.3" fill="none"/><text x="614.8" y="798" class="wt">0</text><path d="M649.6 786 H757.4 M649.6 801 H757.4" stroke="rgba(0,255,0,0.55)" stroke-width="2" fill="none"/><path d="M649.6 786 L647 793.5 L649.6 801" stroke="#00e000" stroke-width="1.3" fill="none"/><text x="651.8" y="798" class="wt">4</text><rect x="427" y="802.1" width="303" height="1.5" fill="#3e3c41"/><path d="M428.1 808 H524.4 M428.1 823 H524.4" stroke="rgba(0,255,0,0.55)" stroke-width="2" fill="none"/><path d="M428.1 808 L425.5 815.5 L428.1 823" stroke="#00e000" stroke-width="1.3" fill="none"/><path d="M524.4 808 L527 815.5 L524.4 823" stroke="#00e000" stroke-width="1.3" fill="none"/><text x="430.3" y="820" class="wt">9</text><path d="M530.4 808 H757.4 M530.4 823 H757.4" stroke="rgba(0,255,0,0.55)" stroke-width="2" fill="none"/><path d="M530.4 808 L527.8 815.5 L530.4 823" stroke="#00e000" stroke-width="1.3" fill="none"/><text x="532.5999999999999" y="820" class="wt">5</text><rect x="427" y="824.1" width="303" height="1.5" fill="#3e3c41"/><rect x="526.8" y="807" width="3.8" height="17" fill="#00f000"/><path d="M428.1 830 H525.4 M428.1 845 H525.4" stroke="rgba(0,255,0,0.55)" stroke-width="2" fill="none"/><path d="M428.1 830 L425.5 837.5 L428.1 845" stroke="#00e000" stroke-width="1.3" fill="none"/><path d="M525.4 830 L528 837.5 L525.4 845" stroke="#00e000" stroke-width="1.3" fill="none"/><text x="430.3" y="842" class="wt">1</text><path d="M531.1 830 H757.4 M531.1 845 H757.4" stroke="rgba(0,255,0,0.55)" stroke-width="2" fill="none"/><path d="M531.1 830 L528.5 837.5 L531.1 845" stroke="#00e000" stroke-width="1.3" fill="none"/><text x="533.3" y="842" class="wt">1</text><rect x="427" y="846.1" width="303" height="1.5" fill="#3e3c41"/><rect x="528" y="829" width="3.5" height="17" fill="#00f000"/><path d="M426 867 H731" stroke="rgba(0,255,0,0.55)" stroke-width="2" fill="none" stroke-linejoin="round"/><rect x="427" y="868.1" width="303" height="1.5" fill="#3e3c41"/><path d="M426.5 889 V874 H433.02 V889 H438.55 V874 H445.07 V889 H450.60 V874 H457.12 V889 H462.65 V874 H469.18 V889 H474.70 V874 H481.23 V889 H486.75 V874 H493.28 V889 H498.80 V874 H505.33 V889 H510.85 V874 H517.38 V889 H522.90 V874 H529.43 V889 H534.95 V874 H541.48 V889 H547.00 V874 H553.52 V889 H559.05 V874 H565.57 V889 H571.10 V874 H577.62 V889 H583.15 V874 H589.67 V889 H595.20 V874 H601.72 V889 H607.25 V874 H613.77 V889 H619.30 V874 H625.82 V889 H631.35 V874 H637.87 V889 H643.40 V874 H649.92 V889 H655.45 V874 H661.97 V889 H667.50 V874 H674.02 V889 H679.55 V874 H686.07 V889 H691.60 V874 H698.12 V889 H703.65 V874 H710.17 V889 H715.70 V874 H722.22 V889 H727.75 V874 H734.27 V889 H739.80 V874" stroke="rgba(0,255,0,0.55)" stroke-width="2" fill="none" stroke-linejoin="round"/><rect x="427" y="890.1" width="303" height="1.5" fill="#3e3c41"/><rect x="426" y="57.5" width="304" height="1.5" fill="#5a5a5a"/><rect x="427.75" y="58" width="1.5" height="4.5" fill="#5a5a5a"/><rect x="452.12" y="58" width="1.5" height="4.5" fill="#5a5a5a"/><rect x="476.49" y="58" width="1.5" height="4.5" fill="#5a5a5a"/><rect x="500.86" y="58" width="1.5" height="4.5" fill="#5a5a5a"/><rect x="525.23" y="58" width="1.5" height="4.5" fill="#5a5a5a"/><rect x="549.60" y="58" width="1.5" height="4.5" fill="#5a5a5a"/><rect x="573.97" y="58" width="1.5" height="4.5" fill="#5a5a5a"/><rect x="598.34" y="58" width="1.5" height="4.5" fill="#5a5a5a"/><rect x="622.71" y="58" width="1.5" height="4.5" fill="#5a5a5a"/><rect x="647.08" y="58" width="1.5" height="4.5" fill="#5a5a5a"/><rect x="671.45" y="58" width="1.5" height="4.5" fill="#5a5a5a"/><rect x="695.82" y="58" width="1.5" height="4.5" fill="#5a5a5a"/><rect x="720.19" y="58" width="1.5" height="4.5" fill="#5a5a5a"/><text x="426" y="57" class="rt" textLength="67" lengthAdjust="spacingAndGlyphs">418923053 ps</text><text x="623" y="57" class="rt" textLength="67" lengthAdjust="spacingAndGlyphs">500000000 ps</text><rect x="622" y="58" width="1.6" height="856" fill="rgba(255,255,255,0.3)"/><rect x="501" y="47" width="1.8" height="867" fill="#c8c8c8"/><rect x="502.2" y="48" width="112.2" height="13.8" fill="none" stroke="#bdbdbd" stroke-width="1.5"/><text x="504.5" y="59" class="rt" textLength="94" lengthAdjust="spacingAndGlyphs">C1 T=450137131ps</text></svg><div class="r" style="left:68px;top:532px;width:233px;height:197px;background:#252526;box-shadow:0 1px 4px rgba(0,0,0,0.35);"></div><div class="t" style="left:95px;top:545.24px;font-size:13px;line-height:14.52px;color:#cccccc;font-weight:normal;-webkit-text-stroke:0;">Open Declaration</div><div class="r" style="left:78px;top:566px;width:213px;height:1px;background:#454545;"></div><div class="t" style="left:95px;top:577.24px;font-size:13px;line-height:14.52px;color:#cccccc;font-weight:normal;-webkit-text-stroke:0;">Add new group</div><div class="t" style="left:95px;top:602.24px;font-size:13px;line-height:14.52px;color:#cccccc;font-weight:normal;-webkit-text-stroke:0;">Move To Group</div><div class="t" style="left:95px;top:628.24px;font-size:13px;line-height:14.52px;color:#cccccc;font-weight:normal;-webkit-text-stroke:0;">Remove</div><div class="t" style="left:95px;top:653.24px;font-size:13px;line-height:14.52px;color:#cccccc;font-weight:normal;-webkit-text-stroke:0;">Change Color</div><div class="t" style="left:95px;top:678.24px;font-size:13px;line-height:14.52px;color:#cccccc;font-weight:normal;-webkit-text-stroke:0;">Change Signal Radix</div><div class="t" style="left:95px;top:704.24px;font-size:13px;line-height:14.52px;color:#cccccc;font-weight:normal;-webkit-text-stroke:0;">Add Separator</div><svg class="r" style="left:276px;top:653px" width="10" height="12" viewBox="0 0 10 12"><path d="M2.2 1.2 L7.2 6 L2.2 10.8" stroke="#c5c5c5" stroke-width="1.1" fill="none"/></svg><svg class="r" style="left:276px;top:678px" width="10" height="12" viewBox="0 0 10 12"><path d="M2.2 1.2 L7.2 6 L2.2 10.8" stroke="#c5c5c5" stroke-width="1.1" fill="none"/></svg>
</body></html>
